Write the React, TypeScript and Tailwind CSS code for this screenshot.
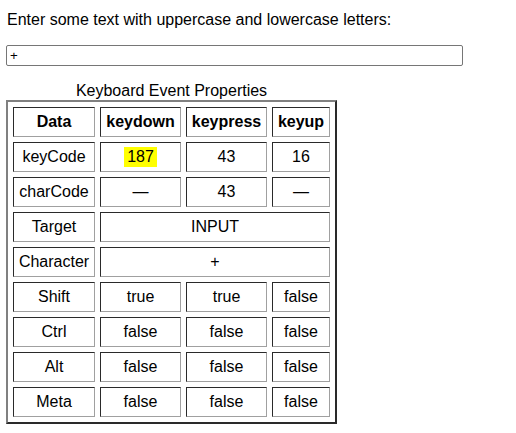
import React from "react";

const cell =
  "border border-t-[#2a2a2a] border-l-[#2a2a2a] border-b-[#a0a0a0] border-r-[#a0a0a0] h-[30px] p-0 text-center align-middle";

type Row = { label: string; vals: (string | { v: string; span?: number; hl?: boolean })[] };

const rows: Row[] = [
  { label: "keyCode", vals: [{ v: "187", hl: true }, "43", "16"] },
  { label: "charCode", vals: ["—", "43", "—"] },
  { label: "Target", vals: [{ v: "INPUT", span: 3 }] },
  { label: "Character", vals: [{ v: "+", span: 3 }] },
  { label: "Shift", vals: ["true", "true", "false"] },
  { label: "Ctrl", vals: ["false", "false", "false"] },
  { label: "Alt", vals: ["false", "false", "false"] },
  { label: "Meta", vals: ["false", "false", "false"] },
];

export default function App() {
  return (
    <div
      className="bg-white text-black min-h-[433px] pl-[6px] pt-[11px] text-[16px] leading-[18px]"
      style={{ fontFamily: '"Liberation Sans", Arial, sans-serif' }}
    >
      <div className="pl-[1px]">Enter some text with uppercase and lowercase letters:</div>
      <div className="mt-[16px] w-[457px] h-[21px] border border-[#767676] rounded-[2px] flex items-center pl-[3px] text-[13.33px]">
        +
      </div>
      <div className="mt-[16px] w-[331px] text-center h-[18px] leading-[18px]">Keyboard Event Properties</div>
      <table
        className="border-2 border-t-[#808080] border-l-[#808080] border-b-[#2a2a2a] border-r-[#2a2a2a] border-separate border-spacing-[5px] w-[331px]"
      >
        <colgroup>
          <col className="w-[82px]" />
          <col className="w-[81px]" />
          <col className="w-[81px]" />
          <col className="w-[58px]" />
        </colgroup>
        <tbody>
          <tr>
            <th className={cell + " font-bold"}>Data</th>
            <th className={cell + " font-bold"}>keydown</th>
            <th className={cell + " font-bold"}>keypress</th>
            <th className={cell + " font-bold"}>keyup</th>
          </tr>
          {rows.map((r) => (
            <tr key={r.label}>
              <td className={cell}>{r.label}</td>
              {r.vals.map((x, i) => {
                const o = typeof x === "string" ? { v: x } : x;
                return (
                  <td key={i} className={cell} colSpan={o.span || 1}>
                    {o.hl ? (
                      <span className="bg-[#ffff00] inline-block px-[3px] leading-[20px]">{o.v}</span>
                    ) : (
                      o.v
                    )}
                  </td>
                );
              })}
            </tr>
          ))}
        </tbody>
      </table>
    </div>
  );
}
